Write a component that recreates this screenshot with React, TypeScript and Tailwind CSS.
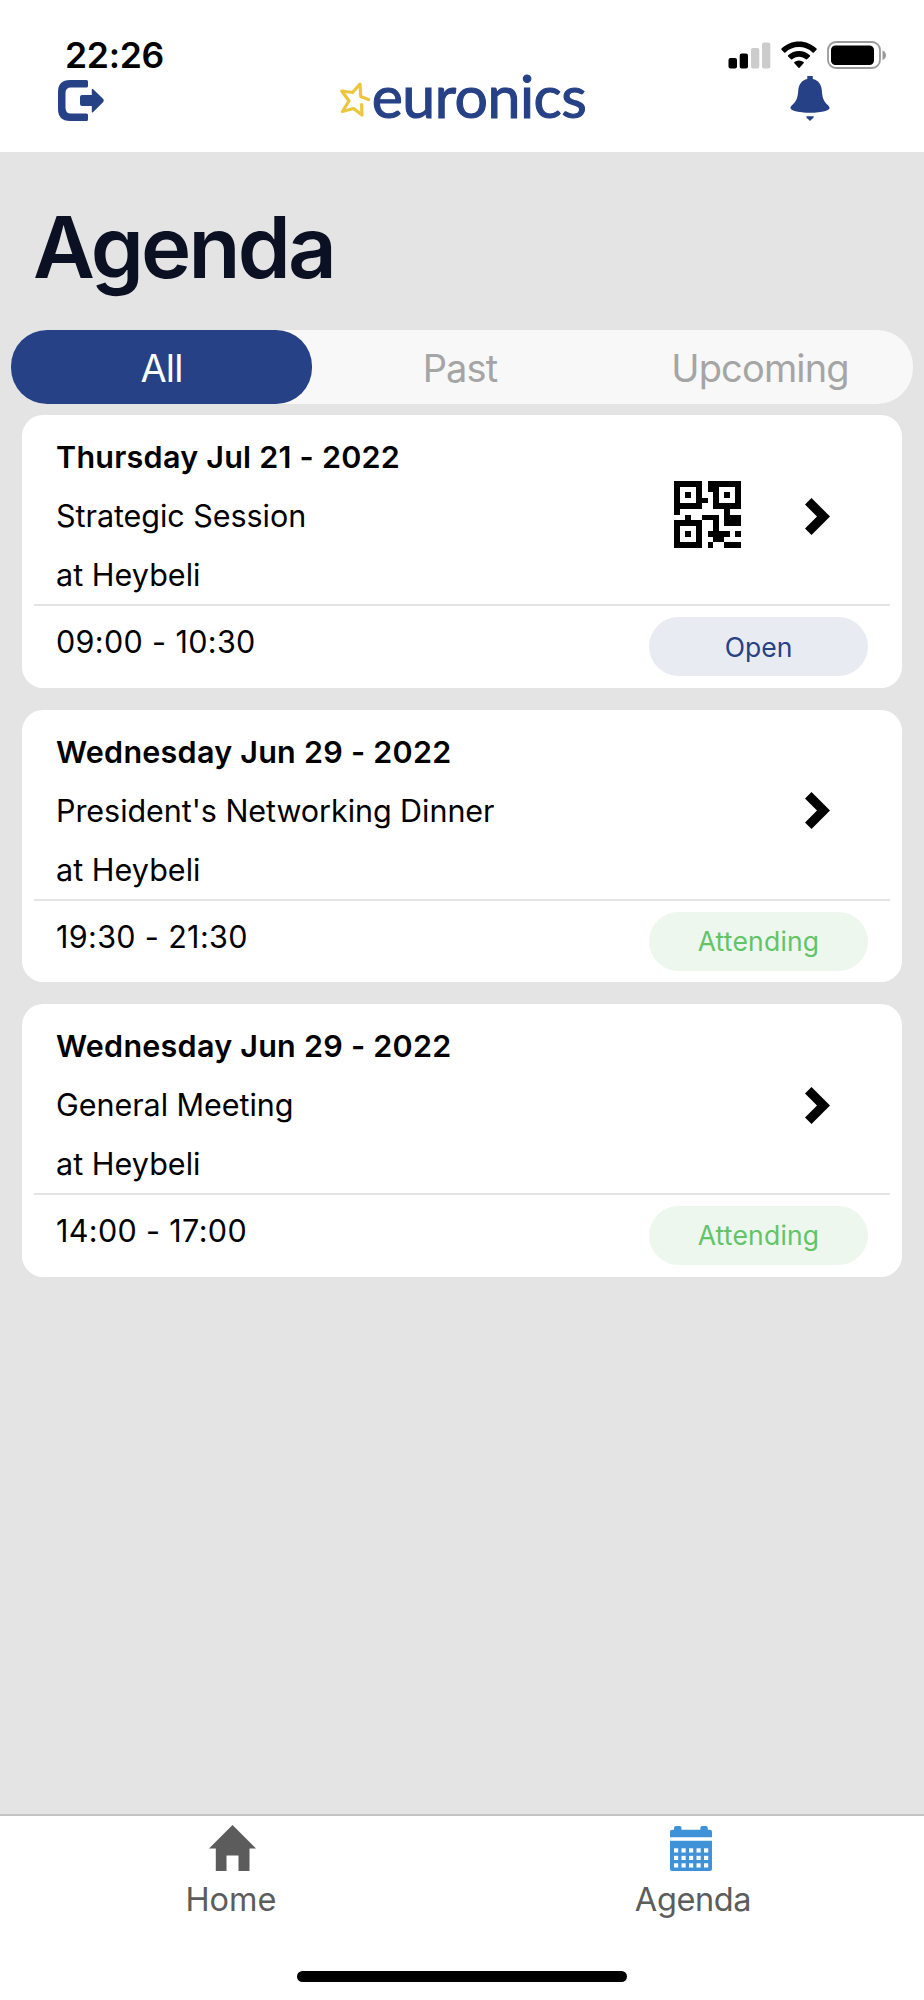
interface AgendaItem {
    date: string;
    title: string;
    place: string;
    time: string;
    status: "Open" | "Attending";
    hasQr?: boolean;
}

const items: AgendaItem[] = [
    { date: "Thursday Jul 21 - 2022", title: "Strategic Session", place: "at Heybeli", time: "09:00 - 10:30", status: "Open", hasQr: true },
    { date: "Wednesday Jun 29 - 2022", title: "President's Networking Dinner", place: "at Heybeli", time: "19:30 - 21:30", status: "Attending" },
    { date: "Wednesday Jun 29 - 2022", title: "General Meeting", place: "at Heybeli", time: "14:00 - 17:00", status: "Attending" },
]

const qrRows = [
    "#####.######",
    "#...#.##...#",
    "#.#.#..#.#.#",
    "#...##.#...#",
    "#####..#####",
    "#........#..",
    "..#..###.###",
    "#####..#.###",
    "#...#..#....",
    "#.#.#.####.#",
    "#...#..##...",
    "#####.#..###",
]

const QrCode = () => (
    <svg className="mb-[2px] size-[67px]" viewBox="0 0 12 12" shapeRendering="crispEdges">
        {qrRows.map((row, y) =>
            row.split("").map((cell, x) =>
                cell === "#" ? <rect key={`${x}-${y}`} x={x} y={y} width="1" height="1" /> : null
            )
        )}
    </svg>
)

const Chevron = () => (
    <svg className="mt-px h-[37px] w-[25px]" viewBox="0 0 25 37">
        <path d="M6.5 0L25 18.5L6.5 37L0 30.5L12 18.5L0 6.5Z" />
    </svg>
)

const SignalIcon = () => (
    <svg className="h-7 w-[43px]" viewBox="0 0 43 28">
        <rect x="0.5" y="17" width="8.5" height="10.5" rx="2" />
        <rect x="11.7" y="12.5" width="8.3" height="15" rx="2" />
        <rect x="23" y="7" width="8.3" height="20.5" rx="2" fill="#cccccc" />
        <rect x="34" y="1.5" width="8.3" height="26" rx="2" fill="#cccccc" />
    </svg>
)

const WifiIcon = () => (
    <svg className="h-7 w-9" viewBox="0 0 36 28">
        <path d="M18 0.5C24.8 0.5 31 3.2 35.5 7.6Q36 8.2 35.5 8.8L32.8 11.5Q32.2 12 31.6 11.5C28 8.1 23.3 6.1 18 6.1S8 8.1 4.4 11.5Q3.8 12 3.2 11.5L0.5 8.8Q0 8.2 0.5 7.6C5 3.2 11.2 0.5 18 0.5Z" />
        <path d="M18 10C22.1 10 25.9 11.5 28.9 14.2Q29.5 14.8 28.9 15.4L26 18.2Q25.4 18.7 24.8 18.2C22.9 16.6 20.6 15.7 18 15.7S13.1 16.6 11.2 18.2Q10.6 18.7 10 18.2L7.1 15.4Q6.5 14.8 7.1 14.2C10.1 11.5 13.9 10 18 10Z" />
        <path d="M18 19.5Q20.7 19.5 22.6 21.1Q23.2 21.7 22.6 22.3L18.5 26.8Q18 27.3 17.5 26.8L13.4 22.3Q12.8 21.7 13.4 21.1Q15.3 19.5 18 19.5Z" />
    </svg>
)

const BatteryIcon = () => (
    <svg className="h-7 w-[60px]" viewBox="0 0 60 28">
        <rect x="1" y="1" width="52" height="26" rx="8" fill="none" stroke="#999999" strokeWidth="1.8" />
        <rect x="4" y="4.5" width="43" height="19.5" rx="4.5" />
        <path d="M55.5 9.5Q59 11 59 14.3T55.5 19Z" fill="#999999" />
    </svg>
)

const LogoutIcon = () => (
    <svg className="mt-1 h-[42px] w-[46px]" viewBox="0 0 46 42" fill="#264185">
        <path d="M12 0H28.5Q30 0 30 1.5V6Q30 7.5 28.5 7.5H13Q7.5 7.5 7.5 13V28Q7.5 33.5 13 33.5H28.5Q30 33.5 30 35V39.5Q30 41 28.5 41H12Q0 41 0 29V12Q0 0 12 0Z" />
        <path d="M24 15H33.8V9.8Q33.8 8 35.2 9.3L45 18.8Q46.5 20.5 45 22.2L35.2 32Q33.8 33.3 33.8 31.5V26H24Q22 26 22 24V17Q22 15 24 15Z" />
    </svg>
)

const BellIcon = () => (
    <svg className="h-[45px] w-10" viewBox="0 0 40 45" fill="#264185">
        <path d="M17.3 0H22.8V3C28.5 4.2 31.3 8.5 31.8 14C32.3 21.5 33.5 25.5 38 29.3C40.8 32.3 39.8 33.8 35.5 34.9C27 37.3 13 37.3 4.5 34.9C0.2 33.8 -0.8 32.3 2 29.3C6.5 25.5 7.8 21.5 8.3 14C8.8 8.5 11.6 4.2 17.3 3Z" />
        <path d="M16.3 40.2H23.8Q23.8 42.2 22 43L20 45L18 43Q16.3 42.2 16.3 40.2Z" />
    </svg>
)

const StarIcon = () => (
    <svg className="mt-[2px] h-9 w-8" viewBox="0 0 32 36" fill="none" stroke="#ecc63f" strokeWidth="3.2" strokeLinecap="round" strokeLinejoin="round">
        <path d="M28.5 17.6L20.7 14.5L20 2L12.5 10.5L1.8 9L9 19L2.3 29.5L13.5 26.5L22 33L21.6 22.5" />
    </svg>
)

const HomeIcon = () => (
    <svg className="ml-[3px] h-[46px] w-[47px]" viewBox="0 0 47 46" fill="#5c5c5c">
        <path d="M23.5 0L47 23.5H40.5V46H29.5V30.5H17.5V46H6.8V23.5H0Z" />
    </svg>
)

const CalendarIcon = () => (
    <svg className="mr-[4px] h-[45px] w-[42px]" viewBox="0 0 42 45" fill="#4092d8">
        <path d="M0 11.3V5.8Q0 3.8 2 3.8H4V2Q4 0 6 0H9.5Q11.5 0 11.5 2V3.8H30.3V2Q30.3 0 32.3 0H35.8Q37.8 0 37.8 2V3.8H40Q42 3.8 42 5.8V11.3Z" />
        <path d="M0 14.8H42V43Q42 45 40 45H2Q0 45 0 43Z" />
        {[0, 1, 2].map((row) =>
            [0, 1, 2, 3, 4].map((col) => (
                <rect key={`${row}-${col}`} x={4 + col * 7.5} y={22.3 + row * 7.5} width="4.2" height="4.2" fill="#ffffff" />
            ))
        )}
    </svg>
)

const AgendaCard = ({ item }: { item: AgendaItem }) => {
    return (
        <article className="flex h-[272.5px] flex-col rounded-[21px] bg-white px-3 pt-3">
            <div className="flex h-[177px] items-center justify-between pl-[22px] pr-[60px]">
                <div className="text-[30.5px] leading-[59px] whitespace-nowrap">
                    <h2 className="font-semibold tracking-[0.25px]">{item.date}</h2>
                    <p className="tracking-[-0.05px]">{item.title}</p>
                    <p className="tracking-[0.05px]">{item.place}</p>
                </div>
                <div className="flex items-center gap-16">
                    {item.hasQr && <QrCode />}
                    <Chevron />
                </div>
            </div>
            <div className="flex grow items-start justify-between border-t-2 border-[#e4e4e4] pl-[22px] pr-[22px]">
                <p className="pt-[6px] text-[30.5px] leading-[59px] tracking-[0.35px]">{item.time}</p>
                <span
                    className={
                        item.status === "Open"
                            ? "mt-[11px] h-[59px] w-[219px] rounded-full bg-[#e9ebf3] text-center text-[26.5px] leading-[60px] text-[#264185]"
                            : "mt-[11px] h-[59px] w-[219px] rounded-full bg-[#edf7ee] text-center text-[26.5px] leading-[59px] tracking-[0.2px] text-[#62c466]"
                    }
                >
                    {item.status}
                </span>
            </div>
        </article>
    )
}

const App = () => {
    return (
        <div className="flex h-[2000px] w-[924px] flex-col bg-[#e4e4e4] font-['Inter',sans-serif] text-black">
            <header className="h-[152px] bg-white pt-[34px]">
                <div className="flex h-[42px] items-center justify-between pl-[65px] pr-[37px]">
                    <span className="pt-[2px] text-[35.5px] font-semibold leading-[42px] tracking-[-0.3px]">22:26</span>
                    <div className="flex items-center gap-[10px]">
                        <SignalIcon />
                        <WifiIcon />
                        <BatteryIcon />
                    </div>
                </div>
                <div className="flex h-[45px] items-center justify-between pl-[58px] pr-[94px]">
                    <LogoutIcon />
                    <div className="flex items-center pl-[32px]">
                        <StarIcon />
                        <span className="h-[45px] font-['Lato',sans-serif] text-[59px] leading-[40px] tracking-[-0.5px] text-[#264185] [-webkit-text-stroke:1.1px_#264185]">euronics</span>
                    </div>
                    <BellIcon />
                </div>
            </header>

            <main className="flex grow flex-col">
                <h1 className="px-[33px] pt-[46px] text-[85px] font-semibold leading-[100px] tracking-[-2.8px] text-[#0b1023]">Agenda</h1>

                <div className="mx-[11px] mt-8 flex h-[74px] rounded-[36px] bg-[#f8f8f8] text-center text-[38px] leading-[76px] tracking-[-0.85px] text-[#a5a5a5]">
                    <button className="w-[301px] rounded-[36px] bg-[#264185] text-white">All</button>
                    <button className="w-[296px]">Past</button>
                    <button className="w-[304px]">Upcoming</button>
                </div>

                <div className="mt-[11px] flex flex-col gap-[22px] px-[22px]">
                    {items.map((item, index) => (
                        <AgendaCard key={index} item={item} />
                    ))}
                </div>
            </main>

            <nav className="flex h-[186px] flex-col items-center border-t-2 border-[#c4c4c4] bg-white text-[32.5px] text-[#5c5c5c]">
                <div className="grid h-[155px] w-full grid-cols-2">
                    <a className="flex flex-col items-center pt-[9px]">
                        <HomeIcon />
                        <span className="mt-[9px] leading-[40px]">Home</span>
                    </a>
                    <a className="flex flex-col items-center pt-[10px]">
                        <CalendarIcon />
                        <span className="mt-[9px] leading-[40px] tracking-[-0.4px]">Agenda</span>
                    </a>
                </div>
                <div className="h-[11px] w-[330px] rounded-full bg-black" />
            </nav>
        </div>
    )
}

export default App
